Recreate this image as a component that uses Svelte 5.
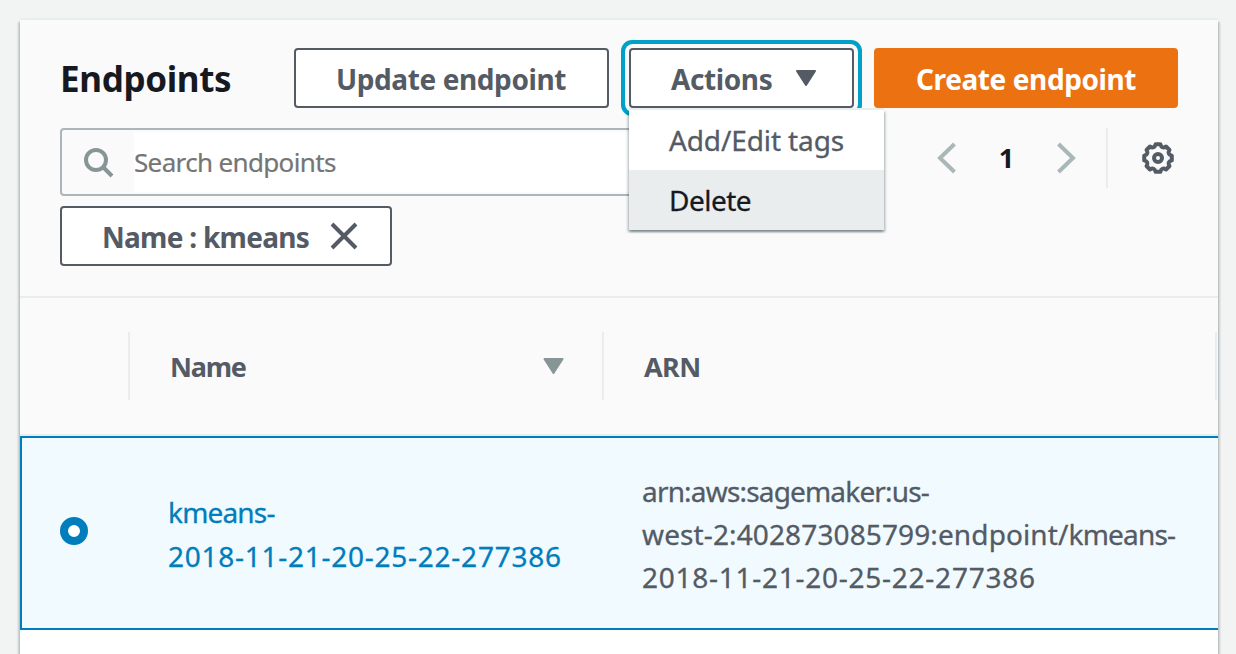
<script>
  const actions = ['Add/Edit tags', 'Delete'];
  const endpoint = {
    name: ['kmeans-', '2018-11-21-20-25-22-277386'],
    arn: ['arn:aws:sagemaker:us-', 'west-2:402873085799:', 'endpoint/', 'kmeans-', '2018-11-21-20-25-22-277386']
  };

  // Eight flat teeth joined by curved valleys.
  function gearPath(cx, cy, outer, inner) {
    const at = (r, deg) => {
      const a = (deg * Math.PI) / 180;
      return `${(cx + r * Math.sin(a)).toFixed(2)} ${(cy - r * Math.cos(a)).toFixed(2)}`;
    };
    let d = '';
    for (let k = 0; k < 8; k++) {
      const a = k * 45;
      d += `${k ? 'L' : 'M'}${at(outer, a - 10)}L${at(outer, a + 10)}Q${at(inner, a + 22.5)} ${at(outer, a + 35)}`;
    }
    return d + 'Z';
  }
  const gear = gearPath(17, 17, 14, 9.6);
</script>

<main class="panel">
  <header class="head">
    <div class="toolbar">
      <h1>Endpoints</h1>
      <button class="btn update"><span class="label">Update endpoint</span></button>
      <div class="dropdown">
        <button class="btn trigger">
          <span class="label">Actions</span>
          <svg width="22" height="18" viewBox="0 0 22 18"><path d="M2 2H20L11 16Z" fill="#545b64" stroke="#545b64" stroke-width="2" stroke-linejoin="round" /></svg>
        </button>
        <ul class="menu">
          {#each actions as action, i}
            <li class:active={i === 1}>{action}</li>
          {/each}
        </ul>
      </div>
      <button class="btn primary"><span class="label">Create endpoint</span></button>
    </div>

    <div class="filters">
      <div class="search">
        <span class="glass">
          <svg width="32" height="32" viewBox="0 0 32 32" fill="none" stroke="#879596" stroke-width="4"><circle cx="13" cy="13" r="10" /><path d="M20 20L29 29" /></svg>
        </span>
        <span class="placeholder">Search endpoints</span>
      </div>
      <nav class="pager">
        <svg width="20" height="32" viewBox="0 0 20 32" fill="none" stroke="#aab7b8" stroke-width="4"><path d="M17.500 2L3 16L17.500 30" /></svg>
        <span class="page">1</span>
        <svg width="20" height="32" viewBox="0 0 20 32" fill="none" stroke="#aab7b8" stroke-width="4"><path d="M2.500 2L17 16L2.500 30" /></svg>
      </nav>
      <div class="settings">
        <svg width="34" height="34" viewBox="0 0 34 34" fill="none" stroke="#545b64" stroke-width="4" stroke-linejoin="round"><path d={gear} /><circle cx="17" cy="17" r="4" /></svg>
      </div>
    </div>

    <button class="btn token">
      <span class="label filter">Name : kmeans</span>
      <svg width="28" height="28" viewBox="0 0 28 28" stroke="#545b64" stroke-width="4"><path d="M2 2L26 26M26 2L2 26" /></svg>
    </button>
  </header>

  <section class="table">
    <div class="row columns">
      <div class="cell"></div>
      <div class="cell"><span class="label">Name</span>
        <svg width="22" height="18" viewBox="0 0 22 18"><path d="M2.500 2H20.500L11.500 16Z" fill="#879596" stroke="#879596" stroke-width="2" stroke-linejoin="round" /></svg>
      </div>
      <div class="cell"><span class="label arn-label">ARN</span></div>
    </div>
    <div class="row selected">
      <div class="pick"><span class="radio"></span></div>
      <div class="value link">
        <div class="words">{endpoint.name[0]}</div>
        <div class="digits">{endpoint.name[1]}</div>
      </div>
      <div class="value">
        <div class="words">{endpoint.arn[0]}</div>
        <div class="mixed">{endpoint.arn[1]}{endpoint.arn[2]}<span class="words">{endpoint.arn[3]}</span></div>
        <div class="digits">{endpoint.arn[4]}</div>
      </div>
    </div>
  </section>
</main>

<style>
  :global(body) { margin: 0; background: #f2f3f3; overflow: hidden; }
  .panel, .menu {
    box-shadow: 0 -2px 0 #eaeded, 0 2px 2px rgba(0, 28, 36, 0.3), 2px 2px 2px rgba(0, 28, 36, 0.15), -2px 2px 2px rgba(0, 28, 36, 0.15);
  }
  .panel {
    box-sizing: border-box; width: 1198px; height: 634px; margin: 20px 0 0 20px;
    background: #fff; color: #545b64;
    font: 28px/44px 'Noto Sans', 'Open Sans', sans-serif;
  }
  svg { display: block; flex: none; }
  .label { white-space: nowrap; padding-top: 1px; letter-spacing: -0.4px; }
  .head { box-sizing: border-box; height: 278px; padding: 28px 40px 0; background: #fafafa; border-bottom: 2px solid #eaeded; }
  .toolbar { display: flex; height: 60px; }
  h1 { margin: 0; width: 234px; font-size: 35px; line-height: 62px; letter-spacing: -0.35px; color: #16191f; }
  .btn {
    box-sizing: border-box; display: flex; align-items: center; height: 60px; padding: 0 0 0 40px;
    border: 2px solid #545b64; border-radius: 4px; background: #fff; color: #545b64;
    font: bold 28px/44px 'Noto Sans', 'Open Sans', sans-serif;
  }
  .update { width: 315px; }
  .dropdown { position: relative; margin-left: 20px; }
  .trigger { width: 225px; justify-content: space-between; padding-right: 35px; box-shadow: 0 0 0 4px #fafafa, 0 0 0 8px #00a1c9; }
  .menu {
    position: absolute; left: 0; top: 62px; z-index: 2; box-sizing: border-box; width: 255px; margin: 0; padding: 0; list-style: none;
    background: #fff; letter-spacing: -0.12px; -webkit-text-stroke: 0.3px;
  }
  .menu li { height: 60px; line-height: 61px; padding-left: 40px; }
  .menu .active { background: #eaeded; color: #16191f; letter-spacing: -0.5px; }
  .primary { width: 304px; margin-left: 20px; background: #ec7211; border-color: #ec7211; color: #fff; }
  .filters { display: flex; margin-top: 20px; height: 68px; }
  .search { box-sizing: border-box; display: flex; width: 820px; border: 2px solid #aab7b8; border-radius: 4px; }
  .glass { box-sizing: border-box; width: 72px; padding: 2px 0 0 2px; display: flex; align-items: center; justify-content: center; }
  .placeholder { flex: 1; margin: 2px 0; background: #fff; color: #757575; font-size: 26px; line-height: 60px; letter-spacing: -0.65px; -webkit-text-stroke: 0.2px; }
  .pager { display: flex; align-items: center; height: 60px; margin-left: 57px; }
  .page { width: 99px; text-align: center; font-weight: bold; font-size: 27px; color: #16191f; }
  .settings { height: 60px; margin-left: 30px; padding-left: 33px; display: flex; align-items: center; border-left: 2px solid #eaeded; }
  .token { width: 332px; margin-top: 10px; gap: 21px; }
  .filter { letter-spacing: -0.72px; }
  .row { display: grid; grid-template-columns: 110px 474px 1fr; box-sizing: border-box; }
  .columns { height: 138px; padding: 34px 1px 0 0; background: #fafafa; border-bottom: 2px solid #eaeded; font-weight: bold; }
  .columns .label { font-size: 27px; letter-spacing: -1.2px; }
  .columns .arn-label { letter-spacing: -0.6px; }
  .cell { box-sizing: border-box; height: 68px; padding: 0 38px 0 40px; display: flex; align-items: center; justify-content: space-between; border-right: 2px solid #eaeded; }
  .selected { height: 194px; border: 2px solid #007dbc; border-right: 0; background: #f1faff; align-items: center; }
  .pick { padding: 0 0 4px 38px; }
  .radio { box-sizing: border-box; display: block; width: 28px; height: 28px; border: 8px solid #007dbc; border-radius: 50%; background: #fff; }
  .value { padding: 2px 0 0 36px; line-height: 43px; white-space: nowrap; -webkit-text-stroke: 0.3px; }
  .link { padding-top: 1px; color: #007dbc; line-height: 44px; }
  .words { letter-spacing: -0.82px; }
  .mixed { letter-spacing: 0.12px; }
  .digits { letter-spacing: 0.74px; }
</style>
